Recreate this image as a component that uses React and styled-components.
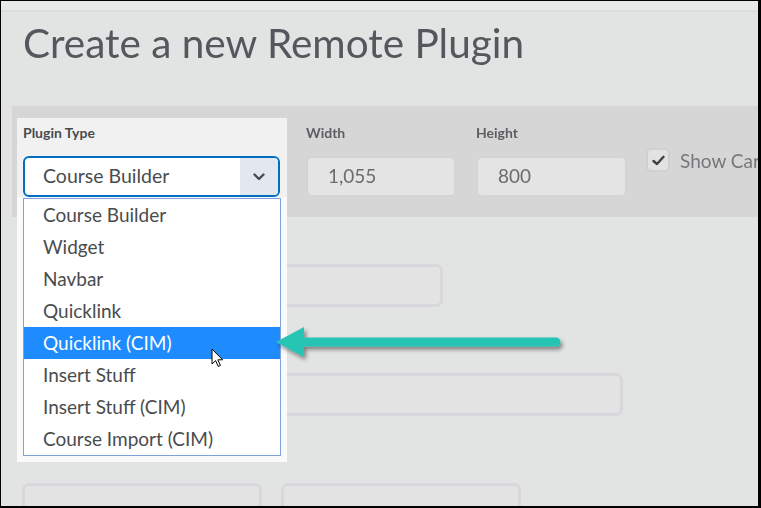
import React from 'react';
import styled, { createGlobalStyle } from 'styled-components';

const GlobalStyle = createGlobalStyle`
  html, body {
    margin: 0;
    padding: 0;
    background: #ffffff;
  }
  body {
    font-family: Lato, "Open Sans", sans-serif;
  }
`;

const Frame = styled.div`
  position: relative;
  width: 761px;
  height: 508px;
  box-sizing: border-box;
  border-style: solid;
  border-color: #000;
  border-width: 1px 3px 2px 1px;
  background: #e2e3e3;
  overflow: hidden;
`;

const TopStrip = styled.div`
  height: 9px;
  background: #e8e9e9;
  border-bottom: 2px solid #dcdddf;
`;

const Title = styled.h1`
  margin: 7px 0 0 22px;
  font-size: 40.5px;
  line-height: 48px;
  font-weight: 400;
  color: #54585c;
  white-space: nowrap;
  filter: blur(0.5px);
`;

const Band = styled.div`
  margin: 39px 0 0 11px;
  height: 111px;
  box-sizing: border-box;
  padding: 12px 0 0 5px;
  background: #d6d6d6;
  display: flex;
  align-items: flex-start;

  & > * {
    flex: none;
  }
`;

const Spotlight = styled.div`
  position: relative;
  z-index: 2;
  width: 270px;
  height: 79px;
  box-sizing: border-box;
  padding: 0 7px 0 6px;
  background: #f1f1f1;
`;

const Label = styled.div`
  margin-top: 7px;
  height: 16px;
  line-height: 16px;
  font-size: 14px;
  font-weight: 700;
  color: ${p => (p.$dim ? '#5c5e61' : '#494c4e')};
  white-space: nowrap;
  filter: ${p => (p.$dim ? 'blur(0.5px)' : 'none')};
`;

const Select = styled.div`
  margin-top: 15px;
  height: 41px;
  box-sizing: border-box;
  border: 2px solid #006fbf;
  border-radius: 6px;
  background: #fff;
  display: flex;
  overflow: hidden;
`;

const SelectValue = styled.div`
  flex: 1;
  padding: 0 0 2px 18px;
  display: flex;
  align-items: center;
  font-size: 19.5px;
  color: #494c4e;
`;

const Chevron = styled.div`
  width: 38px;
  background: #e3e8f0;
  display: flex;
  align-items: center;
  justify-content: center;
  color: #494c4e;
`;

const DropPanel = styled.div`
  position: absolute;
  left: 0;
  top: 100%;
  width: 270px;
  height: 265px;
  box-sizing: border-box;
  padding: 1px 6px 0 6px;
  background: #fafafa;
`;

const List = styled.ul`
  margin: 0;
  padding: 0;
  list-style: none;
  border: 1px solid #7fa2d8;
  background: #fff;
`;

const Option = styled.li`
  height: 32px;
  padding: 0 0 2px 19px;
  box-sizing: border-box;
  display: flex;
  align-items: center;
  font-size: 19px;
  color: ${p => (p.$active ? '#ffffff' : '#494c4e')};
  background: ${p => (p.$active ? '#1e8cff' : 'transparent')};
  white-space: nowrap;
`;

const DimField = styled.div`
  margin-left: ${p => p.$gap}px;
  width: ${p => p.$width}px;
`;

const NumberBox = styled.div`
  margin-top: 15px;
  height: 41px;
  box-sizing: border-box;
  border: 2px solid #d4d4d7;
  border-radius: 6px;
  background: #e4e4e4;
  padding: 0 0 2px 20px;
  display: flex;
  align-items: center;
  font-size: 19px;
  color: #6a6c6f;
  filter: blur(0.5px);
`;

const CheckRow = styled.div`
  margin: 30px 0 0 19px;
  display: flex;
  align-items: center;
  white-space: nowrap;
  filter: blur(0.5px);
`;

const CheckBox = styled.div`
  width: 24px;
  height: 24px;
  box-sizing: border-box;
  border: 2px solid #d0d0d3;
  border-radius: 5px;
  background: #e2e2e2;
  display: flex;
  align-items: center;
  justify-content: center;
  color: #3f4144;
`;

const CheckText = styled.span`
  margin-left: 10px;
  font-size: 19px;
  color: #75777a;
`;

const Form = styled.div`
  padding: 47px 0 0 21px;
  display: flex;
  flex-direction: column;
`;

const Field = styled.div`
  width: ${p => p.$width}px;
  height: 43px;
  flex: none;
  box-sizing: border-box;
  margin-top: ${p => p.$top || 0}px;
  border: 3px solid #d8d8dc;
  border-radius: 7px;
  background: #e3e3e3;
`;

const FieldRow = styled.div`
  display: flex;
  gap: 19px;
  margin-top: 67px;
`;

const Overlay = styled.svg`
  position: absolute;
  left: ${p => p.$x}px;
  top: ${p => p.$y}px;
  z-index: 5;
  overflow: visible;
  pointer-events: none;
`;

const options = [
  'Course Builder',
  'Widget',
  'Navbar',
  'Quicklink',
  'Quicklink (CIM)',
  'Insert Stuff',
  'Insert Stuff (CIM)',
  'Course Import (CIM)',
];

export default function App() {
  return (
    <>
      <GlobalStyle />
      <Frame>
        <TopStrip />
        <Title>Create a new Remote Plugin</Title>

        <Band>
          <Spotlight>
            <Label>Plugin Type</Label>
            <Select>
              <SelectValue>Course Builder</SelectValue>
              <Chevron>
                <svg width="12" height="8" viewBox="0 0 12 8">
                  <path d="M1.5 1.5 L6 6 L10.5 1.5" fill="none" stroke="currentColor" strokeWidth="2.4" strokeLinecap="round" strokeLinejoin="round" />
                </svg>
              </Chevron>
            </Select>
            <DropPanel>
              <List>
                {options.map(o => (
                  <Option key={o} $active={o === 'Quicklink (CIM)'}>{o}</Option>
                ))}
              </List>
            </DropPanel>
          </Spotlight>

          <DimField $gap={19} $width={150}>
            <Label $dim>Width</Label>
            <NumberBox>1,055</NumberBox>
          </DimField>
          <DimField $gap={20} $width={151}>
            <Label $dim>Height</Label>
            <NumberBox>800</NumberBox>
          </DimField>

          <CheckRow>
            <CheckBox>
              <svg width="13" height="11" viewBox="0 0 13 11">
                <path d="M1.5 6 L5 9 L11.5 1.8" fill="none" stroke="currentColor" strokeWidth="2.4" strokeLinecap="round" strokeLinejoin="round" />
              </svg>
            </CheckBox>
            <CheckText>Show Card</CheckText>
          </CheckRow>
        </Band>

        <Form>
          <Field $width={421} />
          <Field $width={601} $top={66} />
          <FieldRow>
            <Field $width={240} />
            <Field $width={240} />
          </FieldRow>
        </Form>

        <Overlay $x={269} $y={319} width="295" height="46" viewBox="0 0 295 46">
          <defs>
            <filter id="arrowShadow" x="-10%" y="-40%" width="120%" height="180%">
              <feDropShadow dx="2" dy="3" stdDeviation="2" floodColor="#000" floodOpacity="0.45" />
            </filter>
          </defs>
          <g filter="url(#arrowShadow)" fill="#28c4b2" stroke="#28c4b2">
            <line x1="30" y1="22" x2="286" y2="22" strokeWidth="9" strokeLinecap="round" />
            <polygon points="6,22 34,7 34,37" strokeWidth="0" />
          </g>
        </Overlay>

        <Overlay $x={210} $y={347} width="13" height="20" viewBox="0 0 13 20">
          <path d="M1 1 L1 16 L4.6 12.6 L7.2 18.4 L9.4 17.4 L6.9 11.8 L11.6 11.8 Z" fill="#fff" stroke="#000" strokeWidth="1" strokeLinejoin="round" />
        </Overlay>
      </Frame>
    </>
  );
}
